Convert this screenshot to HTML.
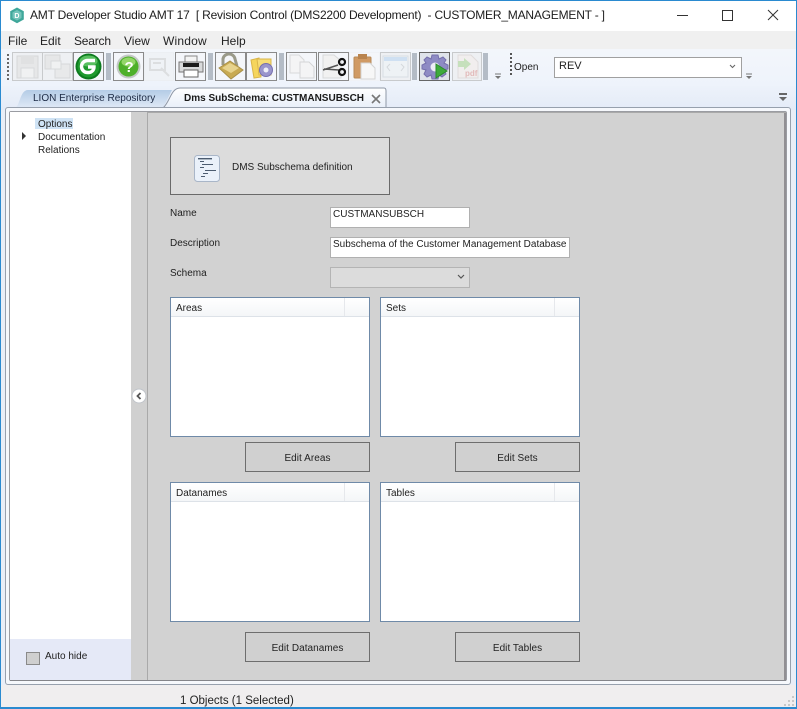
<!DOCTYPE html>
<html><head><meta charset="utf-8">
<style>
*{box-sizing:border-box}
html,body{margin:0;padding:0}
body{width:797px;height:709px;position:relative;overflow:hidden;background:#f0f0f0;font-family:"Liberation Sans",sans-serif;color:#1a1a1a}
.a{position:absolute}
.t{position:absolute;white-space:pre;font-size:10px;line-height:13px;color:#222}
.m{font-size:12px;line-height:15px;top:34px}
.tb{position:absolute;top:52px;width:31px;height:29px;background:#f4f6fa;border:1px solid #8a8a8a}
.tb.off{border-color:#c8cacc;background:#eef0f3}
.tb svg{position:absolute;left:0;top:0;filter:blur(.35px)}
.sep{position:absolute;top:53px;width:5px;height:27px;background:#b4bcc6}
.in{position:absolute;background:#fff;border:1px solid #b0b0b0;font-size:10px;line-height:13px;padding:0 2px;white-space:pre;color:#222}
.list{position:absolute;background:#fff;border:1px solid #6f8aa8}
.list .h{position:absolute;left:0;top:0;right:0;height:19px;background:linear-gradient(#fff,#f4f6f8);border-bottom:1px solid #dde2e8;font-size:10px;line-height:20px;padding:1px 0 0 5px;color:#222}
.list .d{position:absolute;top:0;right:24px;width:1px;height:18px;background:#e6e8ec}
.btn{position:absolute;background:#d0d0d0;border:1px solid #6e6e6e;font-size:10px;letter-spacing:.05px;text-align:center;color:#222;height:30px;line-height:29px;padding-top:1px}
</style></head><body>
<!-- window frame -->
<div class="a" style="left:0;top:0;width:797px;height:31px;background:#fff"></div>
<div class="a" style="left:0;top:31px;width:797px;height:18px;background:#f0f0f0"></div>
<div class="a" style="left:0;top:49px;width:797px;height:37px;background:linear-gradient(#f3f6fb,#eef3fb)"></div>
<div class="a" style="left:0;top:86px;width:797px;height:24px;background:linear-gradient(#edf2fa,#e4ebf7)"></div>
<div class="a" style="left:0;top:110px;width:797px;height:575px;background:#e9eef7"></div>
<div class="a" style="left:0;top:685px;width:797px;height:24px;background:#f0eeef"></div>
<div class="a" style="left:0;top:0;width:797px;height:1px;background:#2a8ad0"></div>
<div class="a" style="left:0;top:0;width:1px;height:709px;background:#2a8ad0"></div>
<div class="a" style="left:796px;top:0;width:1px;height:709px;background:#2a8ad0"></div>
<div class="a" style="left:0;top:707px;width:797px;height:2px;background:#2a8ad0"></div>

<!-- title bar -->
<svg class="a" style="left:9px;top:7px" width="16" height="17" viewBox="0 0 16 17"><path d="M8 0.5 14.8 4.3V12.5L8 16.3 1.2 12.5V4.3Z" fill="#3fa79a"/><path d="M8 3 12.5 5.5V11L8 13.5 3.5 11V5.5Z" fill="#74c4ba"/><text x="5.4" y="11" font-size="7" font-weight="700" fill="#fff" font-family="Liberation Sans">D</text></svg>
<div class="t" style="left:30px;top:8px;font-size:12px;line-height:15px;letter-spacing:-.2px;color:#1c1c1c">AMT Developer Studio AMT 17  [ Revision Control (DMS2200 Development)  - CUSTOMER_MANAGEMENT - ]</div>
<div class="a" style="left:677px;top:15px;width:11px;height:1px;background:#333"></div>
<div class="a" style="left:722px;top:10px;width:11px;height:11px;border:1px solid #333"></div>
<svg class="a" style="left:767px;top:9px" width="12" height="12"><path d="M1 1 11 11M11 1 1 11" stroke="#333" stroke-width="1" fill="none"/></svg>

<!-- menu -->
<div class="t m" style="left:8px">File</div>
<div class="t m" style="left:40px">Edit</div>
<div class="t m" style="left:74px;letter-spacing:-.2px">Search</div>
<div class="t m" style="left:124px">View</div>
<div class="t m" style="left:163px;letter-spacing:.2px">Window</div>
<div class="t m" style="left:221px">Help</div>

<!-- toolbar -->
<svg class="a" style="left:6px;top:53px" width="4" height="27"><g fill="#666"><rect x="1" y="1" width="2" height="2"/><rect x="1" y="5" width="2" height="2"/><rect x="1" y="9" width="2" height="2"/><rect x="1" y="13" width="2" height="2"/><rect x="1" y="17" width="2" height="2"/><rect x="1" y="21" width="2" height="2"/><rect x="1" y="25" width="2" height="2"/></g></svg>

<div class="tb off" style="left:12px"><svg width="29" height="27"><path d="M4 3H25V25H4Z" fill="#e6e7e8" stroke="#d6d7d9"/><rect x="8" y="15" width="13" height="10" fill="#f0f1f2" stroke="#d8dadc"/><rect x="8" y="3" width="13" height="8" fill="#e0e1e2"/></svg></div>
<div class="tb off" style="left:42px"><svg width="29" height="27"><rect x="2" y="2" width="15" height="14" fill="#e6e7e8" stroke="#d6d7d9"/><rect x="12" y="11" width="15" height="14" fill="#e8e9ea" stroke="#d6d7d9"/><rect x="8" y="8" width="10" height="8" fill="#f0f1f2" stroke="#d8dadc"/></svg></div>
<div class="tb" style="left:73px"><svg width="29" height="27" viewBox="0 0 29 27"><circle cx="14.5" cy="13.5" r="13" fill="#0c7a1e"/><circle cx="14.5" cy="13.5" r="11" fill="#1f9a2e"/><ellipse cx="14.5" cy="8" rx="9" ry="5.5" fill="#58bf5f"/><path d="M21 7.5H13.5A6 6 0 0 0 13.5 19.5H15A5.5 5.5 0 0 0 20 14H14" fill="none" stroke="#fff" stroke-width="3.4"/></svg></div>
<div class="sep" style="left:106px"></div>
<div class="tb" style="left:113px"><svg width="29" height="27" viewBox="0 0 29 27"><circle cx="14.5" cy="13.5" r="12" fill="#c4c8c6"/><circle cx="14.5" cy="13.5" r="10" fill="#4eb02a"/><ellipse cx="14.5" cy="9" rx="7" ry="4.5" fill="#93d668"/><text x="10.5" y="19" font-size="15" font-weight="700" fill="#fff" font-family="Liberation Sans">?</text></svg></div>
<div class="tb off" style="left:144px;width:30px;background:#eff2f6;border-color:#eceff3"><svg width="28" height="27"><path d="M5 6H20V17H5ZM8 10H16M16 15 24 23" fill="none" stroke="#dcdee0" stroke-width="2"/></svg></div>
<div class="tb" style="left:175px"><svg width="29" height="27"><rect x="9" y="3" width="12" height="7" fill="#f4f4f4" stroke="#888"/><rect x="3" y="9" width="24" height="10" fill="#d9dadb" stroke="#777"/><rect x="7" y="10" width="16" height="4" fill="#1c1c1c"/><rect x="8" y="17" width="14" height="7" fill="#fff" stroke="#666"/></svg></div>
<div class="sep" style="left:208px"></div>
<div class="tb" style="left:215px"><svg width="29" height="27"><path d="M7 12V7A6 5.5 0 0 1 19 6L21 13" fill="none" stroke="#9a9a8a" stroke-width="3"/><path d="M3 15 14 8 27 17 15 26Z" fill="#c8aa52" stroke="#a8904a"/><path d="M6 15 14 10 23 15 15 20Z" fill="#e7d38d"/></svg></div>
<div class="tb" style="left:246px"><svg width="29" height="27"><path d="M4 7 12 5 14 24 7 25Z" fill="#f5d55c" stroke="#d9b54a"/><path d="M10 6H24V22H12Z" fill="#f8dd76" stroke="#d9b54a"/><circle cx="19" cy="17" r="6.5" fill="#9a95cc" stroke="#7670ae"/><circle cx="19" cy="17" r="2.5" fill="#eeeef8"/></svg></div>
<div class="sep" style="left:279px"></div>
<div class="tb" style="left:286px;border-color:#8a8a8a"><svg width="29" height="27"><path d="M3 2H12L17 7V20H3Z" fill="#f4f4f5" stroke="#d8d9da"/><path d="M13 9H22L27 14V25H13Z" fill="#f4f4f5" stroke="#d4d5d6"/></svg></div>
<div class="tb" style="left:318px"><svg width="29" height="27"><path d="M4 2H15L22 8V25H4Z" fill="#f1f1f1" stroke="#d8d9da"/><path d="M4 17 19 12M5 16 20 17" stroke="#555" stroke-width="1.5" fill="none"/><circle cx="23" cy="9" r="3" fill="none" stroke="#111" stroke-width="2.2"/><circle cx="23" cy="19" r="3" fill="none" stroke="#111" stroke-width="2.2"/></svg></div>
<div class="tb off" style="left:349px;background:#f4f6fa;border-color:#f0f2f6"><svg width="29" height="27"><rect x="4" y="4" width="17" height="21" rx="1" fill="#d09a64" stroke="#b98a58"/><rect x="8" y="1" width="9" height="5" fill="#b9844f"/><path d="M11 10H20L25 15V26H11Z" fill="#f7f7f7" stroke="#d4d4d4"/></svg></div>
<div class="tb off" style="left:380px"><svg width="29" height="27"><rect x="2" y="3" width="25" height="21" fill="#eef2f5" stroke="#d8dee4"/><rect x="3" y="4" width="23" height="4" fill="#cfe0f2"/><path d="M9 11 6 14 9 18M20 11 23 14 20 18" fill="none" stroke="#d4d8dc"/></svg></div>
<div class="sep" style="left:412px"></div>
<div class="tb" style="left:419px;background:#dfe3ea;border-color:#666"><svg width="29" height="27"><path d="M15 2 18 2 19 6 23 4 26 7 24 10 28 12V16L24 17 26 21 22 24 19 22 18 26H12L11 22 7 24 4 21 6 17 2 16V12L6 10 4 7 7 4 11 6 12 2Z" fill="#8e8bc4" stroke="#7570ac"/><circle cx="15" cy="14" r="4.5" fill="#eeeef6"/><path d="M16 11 27 18 16 25Z" fill="#3eab3c" stroke="#2c8a2c"/></svg></div>
<div class="tb off" style="left:452px;width:30px"><svg width="28" height="27"><path d="M5 2H18L25 9V25H5Z" fill="#f1eeee" stroke="#e0dcdc"/><path d="M5 8H11V5L18 11 11 17V14H5Z" fill="#c6e0bc"/><text x="12" y="23" font-size="8" font-weight="700" fill="#e2baba" font-family="Liberation Sans">pdf</text></svg></div>
<div class="sep" style="left:483px"></div>
<svg class="a" style="left:495px;top:73px" width="7" height="7"><path d="M0 1H6" stroke="#777"/><path d="M0 3H6L3 6Z" fill="#777"/></svg>
<svg class="a" style="left:510px;top:53px" width="3" height="24"><g fill="#555"><rect width="2" height="2" y="0"/><rect width="2" height="2" y="4"/><rect width="2" height="2" y="8"/><rect width="2" height="2" y="12"/><rect width="2" height="2" y="16"/><rect width="2" height="2" y="20"/></g></svg>
<div class="t" style="left:514px;top:61px">Open</div>
<div class="in" style="left:554px;top:57px;width:188px;height:21px;font-size:11px;padding:2px 4px 0;border-color:#a0a0a0">REV</div>
<svg class="a" style="left:729px;top:64px" width="7" height="5"><path d="M1 1 3.5 3.5 6 1" stroke="#666" fill="none" stroke-width="1.1"/></svg>
<svg class="a" style="left:746px;top:73px" width="7" height="7"><path d="M0 1H6" stroke="#777"/><path d="M0 3H6L3 6Z" fill="#777"/></svg>

<!-- tabs -->
<svg class="a" style="left:0;top:86px" width="797" height="28">
<defs><linearGradient id="g1" x1="0" y1="0" x2="0" y2="1"><stop offset="0" stop-color="#b4cce6"/><stop offset="1" stop-color="#e0e9f6"/></linearGradient><linearGradient id="g2" x1="0" y1="0" x2="0" y2="1"><stop offset="0" stop-color="#fff"/><stop offset="1" stop-color="#e8eff9"/></linearGradient></defs>
<path d="M15 22 C20 20 20 4 28 4 H172 L163 22Z" fill="url(#g1)"/>
<path d="M163 22 C170 16 171 2 180 2 H384 Q386 2 386 5 V22" fill="url(#g2)" stroke="#8f98a6"/>
<path d="M779 8H787" stroke="#666" stroke-width="2"/><path d="M779 11H787L783 15Z" fill="#666"/>
</svg>
<div class="t" style="left:33px;top:92px;color:#1c2a44">LION Enterprise Repository</div>
<div class="t" style="left:184px;top:92px;font-weight:700;color:#1a1a1a">Dms SubSchema: CUSTMANSUBSCH</div>
<svg class="a" style="left:371px;top:94px" width="10" height="10"><path d="M1 1 9 9M9 1 1 9" stroke="#777" stroke-width="1.6"/></svg>

<!-- main panel -->
<div class="a" style="left:5px;top:107px;width:786px;height:578px;background:#f6f8fc;border:1px solid #97a0ad;border-radius:3px"></div>
<div class="a" style="left:9px;top:111px;width:778px;height:570px;border:1px solid #9a9ca2;border-radius:2px"></div>
<div class="a" style="left:10px;top:112px;width:121px;height:527px;background:#fff"></div>
<div class="a" style="left:10px;top:639px;width:121px;height:41px;background:#e5e9f7"></div>
<div class="a" style="left:131px;top:112px;width:16px;height:568px;background:#d0d0d0"></div>
<div class="a" style="left:147px;top:112px;width:1px;height:568px;background:#a9a9a9"></div>
<div class="a" style="left:148px;top:113px;width:636px;height:567px;background:#d2d2d2"></div>
<div class="a" style="left:784px;top:112px;width:2px;height:568px;background:#918f93"></div>
<div class="a" style="left:147px;top:112px;width:639px;height:1px;background:#a9a9a9"></div>
<div class="a" style="left:10px;top:680px;width:776px;height:1px;background:#85858a"></div>

<!-- sidebar -->
<div class="a" style="left:35px;top:118px;width:38px;height:11px;background:#cfe3f5"></div>
<div class="t" style="left:38px;top:118px">Options</div>
<svg class="a" style="left:22px;top:132px" width="5" height="8"><path d="M0 0 4 4 0 8Z" fill="#333"/></svg>
<div class="t" style="left:38px;top:131px">Documentation</div>
<div class="t" style="left:38px;top:144px">Relations</div>
<div class="a" style="left:26px;top:652px;width:14px;height:13px;background:#cfcfcf;border:1px solid #8a8a8a"></div>
<div class="t" style="left:45px;top:650px">Auto hide</div>
<svg class="a" style="left:131px;top:388px" width="17" height="17"><circle cx="8" cy="8" r="7" fill="#fff" stroke="#c0c4ca"/><path d="M9.5 5 6.5 8 9.5 11" stroke="#555" stroke-width="1.8" fill="none"/></svg>

<!-- header box -->
<div class="a" style="left:170px;top:137px;width:220px;height:58px;background:#dcdcdc;border:1px solid #6a6a6a"></div>
<svg class="a" style="left:194px;top:155px" width="27" height="28"><rect x=".5" y=".5" width="25" height="26" rx="3" fill="#eaf1fa" stroke="#a9b6c8"/><g fill="#4c5c70"><rect x="4" y="3" width="14" height="1.4"/><rect x="6" y="6" width="4" height="1"/><rect x="8" y="9" width="11" height="1"/><rect x="6" y="12" width="4" height="1"/><rect x="11" y="15" width="11" height="1"/><rect x="9" y="18" width="5" height="1"/><rect x="7" y="21" width="4" height="1"/></g></svg>
<div class="t" style="left:232px;top:161px">DMS Subschema definition</div>

<!-- form -->
<div class="t" style="left:170px;top:207px">Name</div>
<div class="in" style="left:330px;top:207px;width:140px;height:21px">CUSTMANSUBSCH</div>
<div class="t" style="left:170px;top:237px">Description</div>
<div class="in" style="left:330px;top:237px;width:240px;height:21px">Subschema of the Customer Management Database</div>
<div class="t" style="left:170px;top:267px">Schema</div>
<div class="a" style="left:330px;top:267px;width:140px;height:21px;background:#dcdcdc;border:1px solid #b4b4b4"></div>
<svg class="a" style="left:457px;top:274px" width="8" height="6"><path d="M1 1 4 4 7 1" stroke="#555" fill="none" stroke-width="1.2"/></svg>

<div class="list" style="left:170px;top:297px;width:200px;height:140px"><div class="h">Areas</div><div class="d"></div></div>
<div class="list" style="left:380px;top:297px;width:200px;height:140px"><div class="h">Sets</div><div class="d"></div></div>
<div class="btn" style="left:245px;top:442px;width:125px">Edit Areas</div>
<div class="btn" style="left:455px;top:442px;width:125px">Edit Sets</div>
<div class="list" style="left:170px;top:482px;width:200px;height:140px"><div class="h">Datanames</div><div class="d"></div></div>
<div class="list" style="left:380px;top:482px;width:200px;height:140px"><div class="h">Tables</div><div class="d"></div></div>
<div class="btn" style="left:245px;top:632px;width:125px">Edit Datanames</div>
<div class="btn" style="left:455px;top:632px;width:125px">Edit Tables</div>

<!-- status -->
<div class="t" style="left:180px;top:694px;font-size:11.5px;line-height:15px">1 Objects (1 Selected)</div>
<svg class="a" style="left:784px;top:695px" width="11" height="12"><g fill="#c8c8c8"><rect x="8" y="1" width="2" height="2"/><rect x="8" y="5" width="2" height="2"/><rect x="4" y="5" width="2" height="2"/><rect x="8" y="9" width="2" height="2"/><rect x="4" y="9" width="2" height="2"/><rect x="0" y="9" width="2" height="2"/></g></svg>
</body></html>
